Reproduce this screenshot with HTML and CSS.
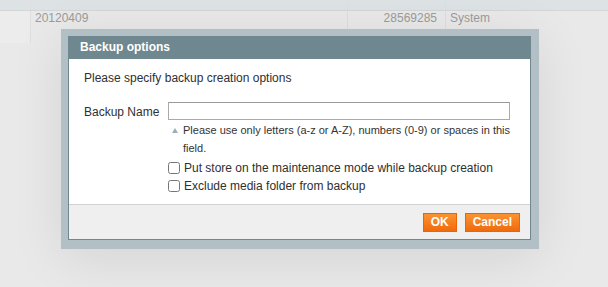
FILE: index.html
```html
<!DOCTYPE html>
<html lang="en">

<head>
    <meta charset="UTF-8">
    <title>Backups</title>
    <link rel="stylesheet" href="styles.css">
</head>

<body>

    <div class="grid">
        <div class="grid-head">
            <div class="col col-first"></div>
            <div class="col col-name"></div>
            <div class="col col-size"></div>
            <div class="col col-type"></div>
        </div>
        <div class="grid-row">
            <div class="col col-first"></div>
            <div class="col col-name">20120409</div>
            <div class="col col-size">28569285</div>
            <div class="col col-type">System</div>
        </div>
    </div>

    <div class="popup">
        <div class="dialog">
            <div class="dialog-title">Backup options</div>
            <div class="dialog-body">
                <p class="intro">Please specify backup creation options</p>
                <table class="form">
                    <tr>
                        <td class="label">Backup Name</td>
                        <td class="value">
                            <input type="text" class="input-text">
                            <div class="note"><span class="arrow"></span>Please use only letters (a-z or A-Z), numbers (0-9) or spaces in this field.</div>
                        </td>
                    </tr>
                    <tr>
                        <td></td>
                        <td class="value">
                            <label class="check"><input type="checkbox"> Put store on the maintenance mode while backup creation</label>
                            <label class="check"><input type="checkbox"> Exclude media folder from backup</label>
                        </td>
                    </tr>
                </table>
            </div>
            <div class="dialog-foot">
                <button class="btn">OK</button>
                <button class="btn">Cancel</button>
            </div>
        </div>
    </div>

</body>

</html>
```

FILE: styles.css
```css
body {
    margin: 0;
    padding: 0;
    width: 608px;
    height: 287px;
    overflow: hidden;
    position: relative;
    background-color: #e9e9e9;
    font-family: "Liberation Sans", Arial, sans-serif;
    font-size: 12px;
    color: #2f2f2f;
}

/* grid behind the popup */
.grid-head {
    display: flex;
    height: 10px;
    background-color: #dde3e5;
    border-bottom: 1px solid #d2d6d8;
}

.grid-row {
    display: flex;
    height: 32px;
    background-color: #e9e9e9;
    color: #9b9b9b;
    font-size: 12px;
    line-height: 12px;
}

.col {
    border-right: 1px solid #dedede;
    box-sizing: border-box;
}

.grid-row .col {
    padding-top: 1px;
}

.col-first {
    width: 31px;
    background-color: #ececec;
}

.grid-head .col-first {
    background-color: transparent;
}

.col-name {
    width: 317px;
    padding-left: 4px;
}

.col-size {
    width: 98px;
    text-align: right;
    padding-right: 8px;
}

.col-type {
    flex: 1;
    padding-left: 4px;
    border-right: none;
}

/* popup */
.popup {
    position: absolute;
    left: 61px;
    top: 29px;
    width: 478px;
    padding: 7px 8px 9px 7px;
    box-sizing: border-box;
    background-color: #b2c0c6;
    box-shadow: 0 10px 50px rgba(0, 0, 0, 0.09);
}

.dialog {
    background-color: #fff;
    border: 1px solid #6f878f;
    border-top: none;
}

.dialog-title {
    height: 23px;
    line-height: 23px;
    background-color: #6f878f;
    color: #fff;
    font-weight: bold;
    padding-left: 11px;
}

.dialog-body {
    padding: 11px 16px 9px 15px;
}

.intro {
    margin: 0 0 16px 0;
    line-height: 16px;
}

.form {
    border-collapse: collapse;
}

.form td {
    padding: 0;
    vertical-align: top;
}

.label {
    width: 84px;
    padding-top: 2px !important;
    line-height: 16px;
}

.input-text {
    display: block;
    width: 342px;
    height: 18px;
    margin: 0;
    padding: 0 3px;
    box-sizing: border-box;
    border: 1px solid #aaa;
    border-top-color: #999;
    font: inherit;
}

.note {
    position: relative;
    padding-left: 15px;
    margin-top: 1px;
    font-size: 11px;
    line-height: 18px;
    color: #333;
}

.arrow {
    position: absolute;
    left: 4px;
    top: 7px;
    width: 0;
    height: 0;
    border-left: 3px solid transparent;
    border-right: 3px solid transparent;
    border-bottom: 5px solid #9bb0b5;
}

.check {
    display: flex;
    align-items: center;
    height: 18px;
    line-height: 18px;
}

.check input {
    width: 12px;
    height: 12px;
    margin: 0 4px 0 0;
}

.form tr + tr td {
    padding-top: 2px;
}

.dialog-foot {
    display: flex;
    justify-content: flex-end;
    gap: 8px;
    height: 34px;
    align-items: center;
    padding-right: 10px;
    background-color: #efefef;
    border-top: 1px solid #d2d2d2;
}

.btn {
    height: 19px;
    padding: 0 7px;
    border: 1px solid #ed6502;
    background: linear-gradient(#fb9332, #f06a0c);
    color: #fff;
    font-family: "Liberation Sans", Arial, sans-serif;
    font-size: 12px;
    font-weight: bold;
    line-height: 17px;
}
```
